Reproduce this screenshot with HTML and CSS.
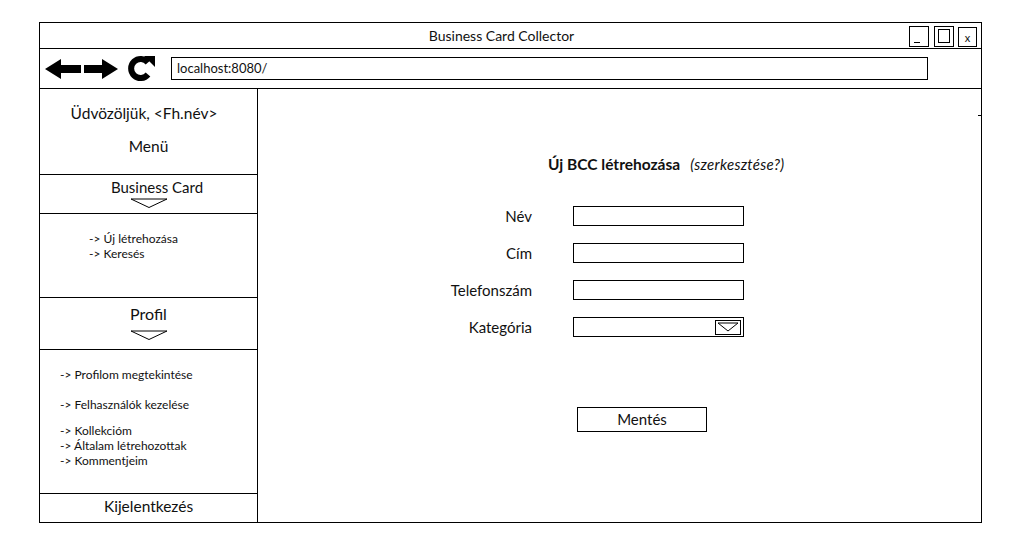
FILE: index.html
```html
<!DOCTYPE html>
<html lang="hu">
  <head>
    <meta charset="UTF-8" />
    <title>Business Card Collector</title>
    <link rel="stylesheet" href="styles.css">
  </head>
  <body>
    <div class="window">
      <div class="titlebar">
        <div class="title">Business Card Collector</div>
        <div class="winbtn min"><span></span></div>
        <div class="winbtn max"><span></span></div>
        <div class="winbtn close">x</div>
      </div>

      <div class="toolbar">
        <svg class="nav" width="76" height="30" viewBox="0 0 76 30">
          <polygon points="1,15 17,5 17,11 37,11 37,19 17,19 17,25" fill="#000" />
          <polygon points="74,15 58,5 58,11 40,11 40,19 58,19 58,25" fill="#000" />
        </svg>
        <svg class="reload" width="32" height="30" viewBox="0 0 32 30">
          <path d="M23 9.5 A9.5 9.5 0 1 0 23 21.5" fill="none" stroke="#000" stroke-width="6" />
          <polygon points="19,3 30,3 30,14" fill="#000" />
        </svg>
        <div class="url">localhost:8080/</div>
      </div>

      <div class="main">
        <div class="sidebar">
          <div class="side-head">
            <div class="welcome">Üdvözöljük, &lt;Fh.név&gt;</div>
            <div class="menu-title">Menü</div>
          </div>
          <div class="side-group bc">
            <div class="group-title">Business Card</div>
            <svg class="caret" width="38" height="11" viewBox="0 0 38 11">
              <polyline points="1,1 19,9.5 37,1 1,1" fill="none" stroke="#000" />
            </svg>
          </div>
          <div class="side-links links-bc">
            <div>-&gt; Új létrehozása</div>
            <div>-&gt; Keresés</div>
          </div>
          <div class="side-group profil">
            <div class="group-title big">Profil</div>
            <svg class="caret" width="38" height="11" viewBox="0 0 38 11">
              <polyline points="1,1 19,9.5 37,1 1,1" fill="none" stroke="#000" />
            </svg>
          </div>
          <div class="side-links links-profil">
            <div>-&gt; Profilom megtekintése</div>
            <div class="spaced">-&gt; Felhasználók kezelése</div>
            <div class="spaced2">-&gt; Kollekcióm</div>
            <div>-&gt; Általam létrehozottak</div>
            <div>-&gt; Kommentjeim</div>
          </div>
          <div class="logout">Kijelentkezés</div>
        </div>

        <div class="content">
          <div class="form-title">
            <b>Új BCC létrehozása</b>
            <i>(szerkesztése?)</i>
          </div>
          <div class="form">
            <label>Név</label>
            <div class="field"></div>
            <label>Cím</label>
            <div class="field"></div>
            <label>Telefonszám</label>
            <div class="field"></div>
            <label>Kategória</label>
            <div class="field select">
              <svg class="sel-arrow" width="26" height="15" viewBox="0 0 26 15">
                <rect x="0.5" y="0.5" width="25" height="14" fill="#fff" stroke="#000" />
                <polyline points="3,3 13,11 23,3 3,3" fill="none" stroke="#000" />
              </svg>
            </div>
          </div>
          <div class="save">Mentés</div>
        </div>
      </div>
    </div>
  </body>
</html>
```

FILE: styles.css
```css
* {
  box-sizing: border-box;
}
body {
  margin: 0;
  background: #fff;
  color: #111;
  font-family: Lato, "Open Sans", sans-serif;
}
.window {
  margin: 22px 0 0 39px;
  width: 943px;
  height: 501px;
  border: 1px solid #000;
  display: flex;
  flex-direction: column;
}
.titlebar {
  height: 26px;
  border-bottom: 1px solid #000;
  display: flex;
  align-items: center;
  padding-right: 4px;
}
.title {
  flex: 1;
  text-align: center;
  padding-left: 60px;
  font-size: 14px;
  padding-bottom: 1px;
}
.winbtn {
  width: 19px;
  height: 20px;
  border: 1px solid #000;
  margin-left: 6px;
  font-size: 11px;
  display: flex;
  align-items: center;
  justify-content: center;
}
.winbtn.min {
  width: 20px;
  height: 21px;
  margin-top: 1px;
  align-items: flex-end;
  justify-content: flex-start;
  padding: 0 0 3px 4px;
}
.winbtn.min span {
  width: 6px;
  height: 1px;
  background: #000;
}
.winbtn.max {
  width: 20px;
  height: 21px;
  margin-left: 5px;
  margin-top: 1px;
}
.winbtn.max span {
  width: 12px;
  height: 14px;
  border: 1px solid #000;
}
.winbtn.close {
  margin-left: 4px;
  margin-top: 2px;
  padding-top: 1px;
}
.toolbar {
  height: 40px;
  border-bottom: 1px solid #000;
  display: flex;
  align-items: center;
  padding-left: 4px;
}
.nav {
  display: block;
  margin-top: 1px;
}
.reload {
  display: block;
  margin-left: 5px;
  margin-top: -1px;
}
.url {
  margin-left: 14px;
  width: 757px;
  height: 23px;
  border: 1px solid #000;
  font-size: 13px;
  line-height: 21px;
  padding-left: 5px;
}
.main {
  flex: 1;
  display: flex;
  position: relative;
}
.sidebar {
  width: 218px;
  border-right: 1px solid #000;
  display: flex;
  flex-direction: column;
  text-align: center;
}
.side-head {
  height: 86px;
  border-bottom: 1px solid #000;
  font-size: 15.5px;
  padding-top: 15px;
}
.welcome {
  padding-right: 9px;
}
.menu-title {
  margin-top: 15px;
}
.side-group {
  border-bottom: 1px solid #000;
  display: flex;
  flex-direction: column;
  align-items: center;
}
.side-group.bc {
  height: 39px;
  padding-top: 3px;
}
.side-group.profil {
  height: 52px;
  padding-top: 7px;
}
.group-title {
  font-size: 15px;
  line-height: 18px;
  padding-left: 17px;
}
.group-title.big {
  font-size: 16px;
  padding-left: 0;
}
.caret {
  display: block;
  margin-top: 2px;
}
.side-group.profil .caret {
  margin-top: 7px;
}
.side-links {
  border-bottom: 1px solid #000;
  text-align: left;
  font-size: 12px;
  line-height: 15px;
}
.links-bc {
  height: 84px;
  padding: 17px 0 0 49px;
}
.links-profil {
  height: 144px;
  padding: 17px 0 0 20px;
}
.links-profil .spaced {
  margin-top: 15px;
}
.links-profil .spaced2 {
  margin-top: 11px;
}
.logout {
  flex: 1;
  font-size: 15.5px;
  line-height: 24px;
}
.content {
  flex: 1;
  padding-top: 66px;
}
.content::after {
  content: "";
  position: absolute;
  right: 0;
  top: 26px;
  width: 3px;
  height: 1px;
  background: #000;
}
.form-title {
  margin-left: 290px;
  display: flex;
  align-items: baseline;
  gap: 10px;
}
.form-title b {
  font-size: 15.5px;
}
.form-title i {
  font-size: 15px;
  letter-spacing: 0.3px;
}
.form {
  margin: 33px 0 0 156px;
  display: grid;
  grid-template-columns: 120px 171px;
  grid-auto-rows: 20px;
  column-gap: 39px;
  row-gap: 17px;
  align-items: center;
}
.form label {
  text-align: right;
  font-size: 15px;
  padding-right: 2px;
}
.field {
  height: 20px;
  border: 1px solid #000;
}
.field.select {
  display: flex;
  justify-content: flex-end;
  align-items: center;
  padding-right: 2px;
}
.sel-arrow {
  display: block;
}
.save {
  margin: 70px 0 0 319px;
  width: 130px;
  height: 25px;
  border: 1px solid #000;
  text-align: center;
  font-size: 15px;
  line-height: 23px;
}
```
